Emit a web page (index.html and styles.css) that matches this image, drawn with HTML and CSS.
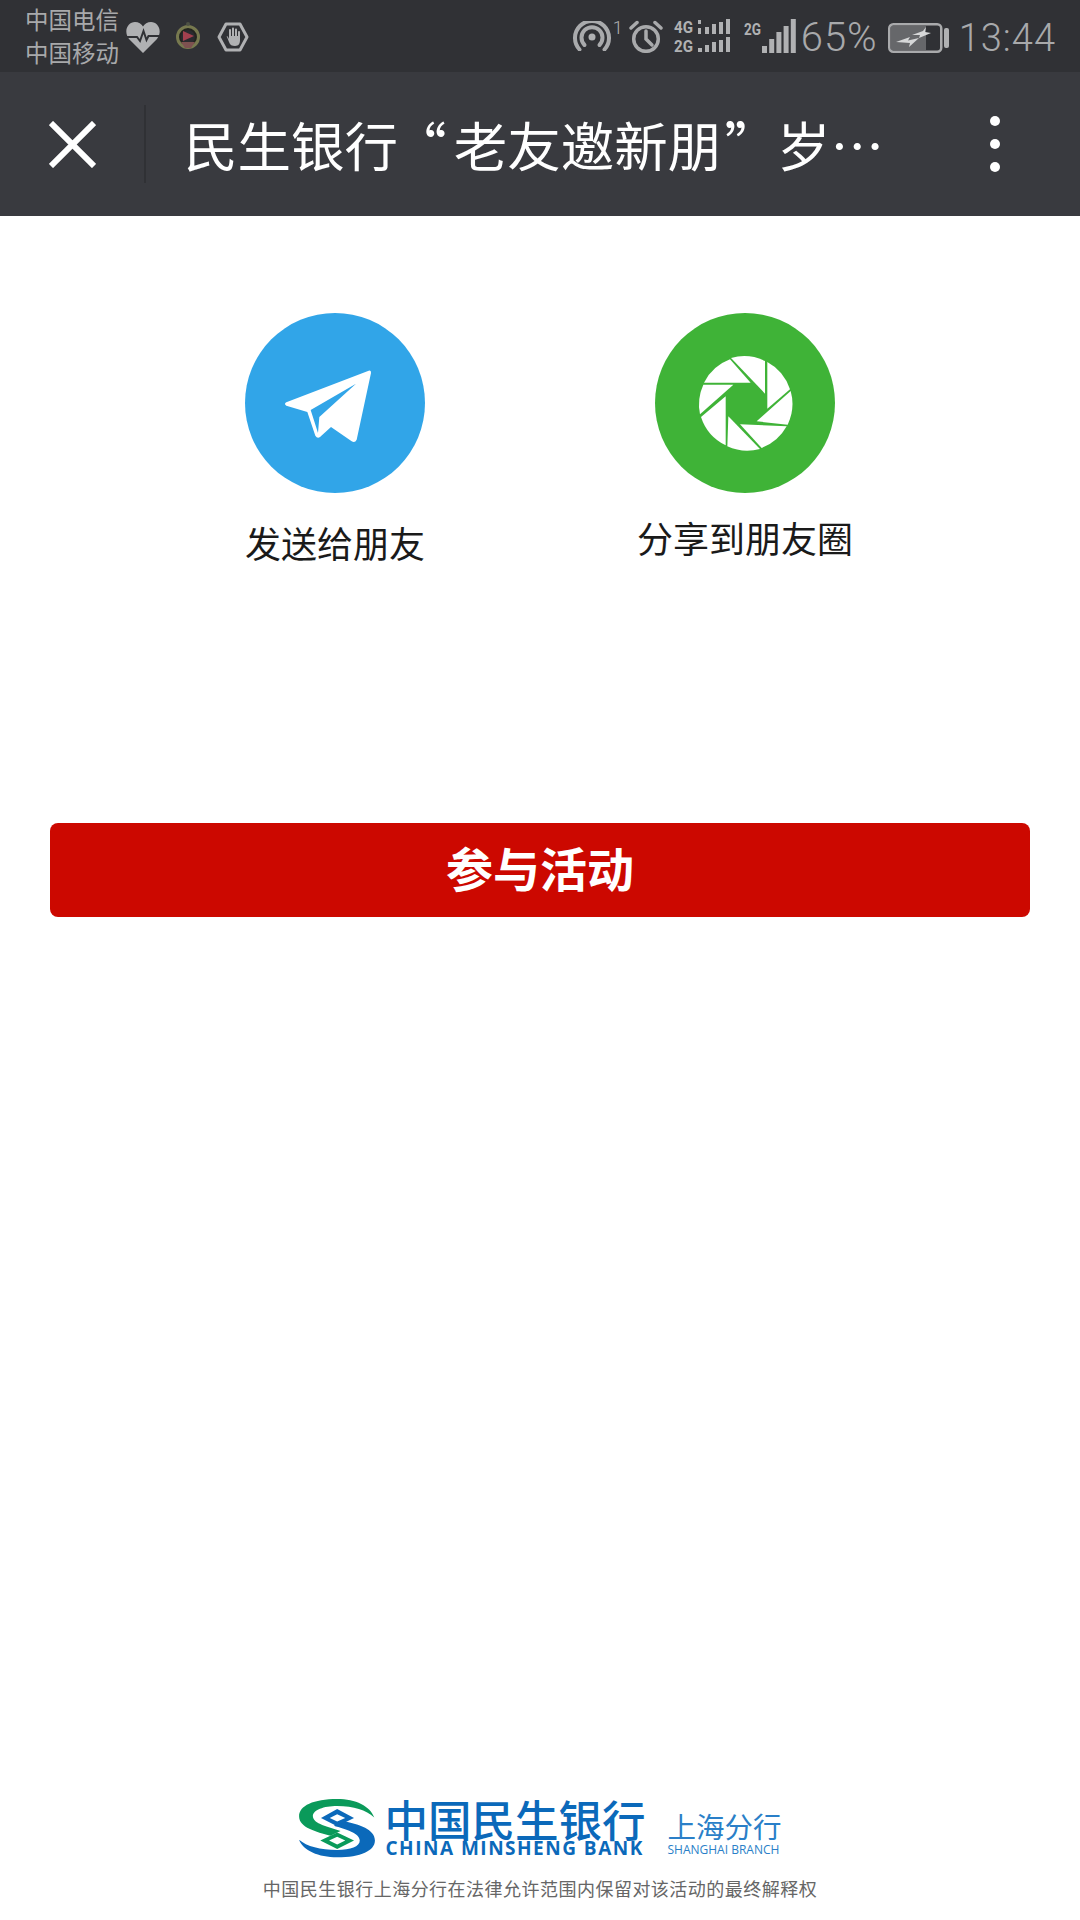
FILE: index.html
```html
<!DOCTYPE html>
<html lang="zh-CN">
<head>
<meta charset="utf-8">
<title>民生银行</title>
<link rel="stylesheet" href="styles.css">
</head>
<body>
<div class="page">
  <header class="status">
    <div class="carriers"><span>中国电信</span><span>中国移动</span></div>
    <svg class="ic-heart" viewBox="0 0 34 32"><path class="g" d="M17 32 L3 18 C-3 10 2 1 9 1 C12.500 1 15.500 3 17 5.500 C18.500 3 21.500 1 25 1 C32 1 37 10 31 18 Z"/><path class="pulse" d="M1 16 H11 L14 20 L17.500 10 L20.500 19 L22.500 15 H33"/></svg>
    <svg class="ic-medal" viewBox="0 0 26 32"><circle class="medal-ring" cx="13" cy="16" r="10.500"/><circle class="medal-in" cx="13" cy="16" r="7"/><path class="medal-red" d="M8 10 L19 15 L8 20 Z"/><path class="medal-low" d="M6 21 H20 L16 27 H10 Z"/><circle class="medal-top" cx="13" cy="3" r="2"/></svg>
    <svg class="ic-hex" viewBox="0 0 32 30"><path class="hex" d="M9 2 H23 L30 15 L23 28 H9 L2 15 Z"/><path class="g" d="M10 15 L12 20 C13 23 15 24 18 24 C22 24 23 21 23 18 V10 C23 8.500 21 8.500 21 10 V14 H20 V7.500 C20 6 18 6 18 7.500 V14 H17 V6.500 C17 5 15 5 15 6.500 V14 H14 V8 C14 6.500 12 6.500 12 8 V17 C11 14 9 13 10 15 Z"/></svg>
    <div class="status-right">
      <svg class="ic-radio" viewBox="0 0 38 30"><circle class="g" cx="19" cy="16" r="3.500"/><path class="line thick" d="M11.500 24 A10.500 10.500 0 1 1 26.500 24"/><path class="line thick" d="M6.500 28.500 A17 17 0 1 1 31.500 28.500"/></svg>
      <span class="sup">1</span>
      <svg class="ic-alarm" viewBox="0 0 34 33"><circle class="line" cx="17" cy="19" r="12.300"/><path class="line" d="M17 11 V19 L23 25"/><path class="line" d="M2 8 L8 2.500 M32 8 L26 2.500"/></svg>
      <svg class="ic-dual" viewBox="0 0 58 34">
        <text class="sig-t" x="0" y="14" textLength="19" lengthAdjust="spacingAndGlyphs">4G</text>
        <text class="sig-t" x="0" y="33" textLength="19" lengthAdjust="spacingAndGlyphs">2G</text>
        <path class="g" d="M24 9h3v6h-3zM24 1h3v4h-3zM31 8h4v7h-4zM38 5h4v10h-4zM45 3h4v12h-4zM52 0h4v15h-4zM24 29h4v4h-4zM31 26h4v7h-4zM38 23h4v10h-4zM45 21h4v12h-4zM52 18h4v15h-4z"/>
      </svg>
      <svg class="ic-2g" viewBox="0 0 18 14"><text class="sig-t" x="0" y="14" textLength="17" lengthAdjust="spacingAndGlyphs">2G</text></svg>
      <svg class="ic-signal" viewBox="0 0 34 34"><path class="g" d="M0 27h5v7H0zM7.200 20h5v14h-5zM14.400 13h5v21h-5zM21.600 7h5v27h-5zM28.800 0h5v34h-5z"/></svg>
      <span class="pct">65%</span>
      <svg class="ic-batt" viewBox="0 0 62 30"><rect class="batt-fill" x="3" y="3" width="35" height="24"/><rect class="batt" x="1.250" y="1.250" width="52" height="27.500" rx="4"/><rect class="g" x="56" y="5" width="5" height="20" rx="2"/><path class="bolt" d="M8 19 L22 14 L20 17.500 L31 15 L21 24 L22 20 Z"/><path class="bolt" d="M24 12 L35 8 L38 4 L37 9 L43 10 L31 15 L32 12 Z"/></svg>
      <span class="time">13:44</span>
    </div>
  </header>

  <nav class="nav">
    <svg class="ic-close" viewBox="0 0 48 48"><path d="M2 2 L46 46 M46 2 L2 46"/></svg>
    <div class="nav-div"></div>
    <div class="nav-title">民生银行<span class="q-open">“</span>老友邀新朋<span class="q-close">”</span>岁…</div>
    <div class="dots"><i></i><i></i><i></i></div>
  </nav>

  <main class="main">
    <section class="share">
      <div class="share-item">
        <svg class="share-ic" viewBox="75 68 540 540">
          <circle class="blue" cx="345" cy="338" r="270"/>
          <path class="w" d="M446 241 L199 336 Q191 341 199 346 L262 365 L286 436 Q292 446 300 440 L333 410 L395 453 Q405 459 410 448 L453 248 Q454 238 446 241 Z"/>
          <path class="blue" d="M408 280 L272 359 L294 428 L298 380 Z"/>
        </svg>
        <div class="share-label l1">发送给朋友</div>
      </div>
      <div class="share-item">
        <svg class="share-ic" viewBox="75 68 540 540">
          <circle class="green" cx="345" cy="338" r="270"/>
          <path class="w" d="M222 277 H362 L300 207 A144 144 0 0 0 222 277 Z"/>
          <path class="w" d="M303 203 L405 310 V212 A144 144 0 0 0 303 203 Z"/>
          <path class="w" d="M412 215 V355 L480 297 A144 144 0 0 0 412 215 Z"/>
          <path class="w" d="M482 302 L380 393 L473 403 A144 144 0 0 0 482 302 Z"/>
          <path class="w" d="M470 408 L330 402 L395 473 A144 144 0 0 0 470 408 Z"/>
          <path class="w" d="M390 476 L295 378 L292 468 A144 144 0 0 0 390 476 Z"/>
          <path class="w" d="M287 465 V318 L213 380 A144 144 0 0 0 287 465 Z"/>
          <path class="w" d="M210 372 L310 283 H220 A144 144 0 0 0 210 372 Z"/>
        </svg>
        <div class="share-label l2">分享到朋友圈</div>
      </div>
    </section>
    <button class="cta">参与活动</button>
  </main>

  <footer class="foot">
    <div class="logo">
      <svg class="mark" viewBox="27 27 225 175">
        <path class="cms-g" d="M250 82 C238 48 195 27 140 27 C70 27 27 47 27 78 C27 112 78 124 120 136 L150 122 C115 110 68 100 68 78 C68 60 100 48 140 48 C190 48 225 60 250 82 Z"/>
        <path class="cms-b" d="M27 148 C38 180 85 200 140 200 C210 200 252 180 252 150 C252 116 205 103 160 92 L130 106 C165 116 207 128 207 150 C207 168 180 178 140 178 C90 178 50 168 27 148 Z"/>
        <path class="cms-b" fill-rule="evenodd" d="M92 83 L140 57 L190 83 L140 108 Z M118 83 L140 94 L164 83 L140 72 Z"/>
        <path class="cms-g" fill-rule="evenodd" d="M90 150 L140 126 L190 150 L140 175 Z M116 150 L140 162 L164 150 L140 139 Z"/>
      </svg>
      <div class="logo-main">
        <div class="logo-cn">中国民生银行</div>
        <div class="logo-en">CHINA MINSHENG BANK</div>
      </div>
      <div class="logo-branch">
        <div class="branch-cn">上海分行</div>
        <div class="branch-en">SHANGHAI BRANCH</div>
      </div>
    </div>
    <p class="legal">中国民生银行上海分行在法律允许范围内保留对该活动的最终解释权</p>
  </footer>
</div>
</body>
</html>
```

FILE: styles.css
```css
* { box-sizing: border-box; }
html, body { margin: 0; padding: 0; background: #fff; }
body { font-family: "Noto Sans CJK SC", "Noto Sans", sans-serif; }
.page { width: 1080px; height: 1920px; display: flex; flex-direction: column; overflow: hidden; }

/* status bar */
.status { height: 72px; flex: none; background: #303135; color: #a8a9ab; display: flex; align-items: center; padding: 0 24px 0 25px; }
.carriers { display: flex; flex-direction: column; font-size: 23.500px; line-height: 33px; width: 95px; white-space: nowrap; }
.g { fill: #b0b1b3; }
.line { fill: none; stroke: #a9aaac; stroke-width: 3.500; stroke-linecap: round; }
.thick { stroke-width: 4; }
.ic-heart { width: 34px; height: 32px; margin-left: 6px; margin-top: 2px; }
.pulse { fill: none; stroke: #303135; stroke-width: 2; }
.ic-medal { width: 26px; height: 32px; margin-left: 15px; margin-top: 2px; }
.medal-ring { fill: #23241f; stroke: #77794f; stroke-width: 3; }
.medal-in { fill: #2a2b2f; }
.medal-red { fill: #a3404e; }
.medal-low { fill: #7d5150; }
.medal-top { fill: #4d5144; }
.ic-hex { width: 32px; height: 30px; margin-left: 16px; margin-top: 2px; }
.hex { fill: none; stroke: #b0b1b3; stroke-width: 3; stroke-linejoin: round; }
.status-right { margin-left: auto; display: flex; align-items: center; }
.ic-radio { width: 38px; height: 30px; margin-top: -1px; }
.sup { font: 300 18px/20px Roboto, sans-serif; margin: -16px 0 0 2px; width: 14px; color: #b0b1b3; }
.ic-alarm { width: 34px; height: 33px; margin-left: 2px; }
.ic-dual { width: 58px; height: 34px; margin-left: 11px; overflow: visible; }
.sig-t { font: 700 17px "Liberation Sans Narrow", Roboto, sans-serif; fill: #b0b1b3; }
.ic-2g { width: 18px; height: 14px; margin: -16px 0 0 12px; overflow: visible; }
.ic-signal { width: 34px; height: 34px; margin-left: 0; }
.pct { font: 300 40px/40px Roboto, sans-serif; letter-spacing: 1px; margin: 3px 0 0 5px; width: 87px; white-space: nowrap; }
.ic-batt { width: 62px; height: 30px; margin-top: 3px; }
.batt { fill: none; stroke: #a9aaac; stroke-width: 2.500; }
.batt-fill { fill: #66676a; }
.bolt { fill: #d6d7d8; }
.time { font: 300 38px/40px Roboto, sans-serif; letter-spacing: 1px; margin: 3px 0 0 9px; white-space: nowrap; }

/* nav */
.nav { height: 144px; flex: none; background: #393a3f; color: #fff; display: flex; align-items: center; padding-left: 49px; }
.ic-close { width: 47px; height: 47px; flex: none; }
.ic-close path { fill: none; stroke: #fff; stroke-width: 6; }
.nav-div { width: 2px; height: 78px; background: #303135; margin-left: 48px; flex: none; }
.nav-title { font-size: 53.500px; line-height: 70px; margin-left: 38px; width: 700px; white-space: nowrap; }
.q-open { font-feature-settings: "palt"; margin: 0 8px 0 21px; }
.q-close { font-feature-settings: "palt"; margin: 0 25px 0 4px; }
.dots { margin-left: 106px; display: flex; flex-direction: column; gap: 13px; }
.dots i { display: block; width: 10px; height: 10px; border-radius: 50%; background: #fff; }

/* main */
.main { flex: none; padding: 97px 50px 0; }
.share { display: flex; justify-content: center; gap: 170px; }
.share-item { width: 240px; display: flex; flex-direction: column; align-items: center; }
.share-ic { width: 180px; height: 180px; display: block; }
.blue { fill: #31a5e8; }
.green { fill: #3fb337; }
.w { fill: #fff; }
.share-label { font-size: 36px; line-height: 50px; color: #1a1a1a; white-space: nowrap; }
.l1 { margin-top: 24px; }
.l2 { margin-top: 19px; }
.cta { display: block; width: 980px; height: 94px; margin-top: 256px; padding: 0 0 6px; border: 0; border-radius: 8px; background: #cc0800; color: #fff; font: 700 47px/88px "Noto Sans CJK SC", sans-serif; }

/* footer */
.foot { margin-top: auto; padding-bottom: 20px; display: flex; flex-direction: column; align-items: center; }
.logo { display: flex; align-items: flex-start; }
.mark { width: 76px; height: 59px; flex: none; }
.cms-g { fill: #0a9a5a; }
.cms-b { fill: #0b69ba; }
.logo-main { margin-left: 10px; color: #0b69ba; width: 261px; }
.logo-cn { font-size: 43.500px; font-weight: 500; line-height: 40px; white-space: nowrap; }
.logo-en { font: 700 19px/18px "Open Sans", sans-serif; letter-spacing: 1.500px; white-space: nowrap; padding-left: 1px; }
.logo-branch { margin-left: 22px; color: #2a7fc8; width: 114px; padding-top: 12px; }
.branch-cn { font-size: 28.500px; line-height: 30px; white-space: nowrap; }
.branch-en { font: 400 12px/14px "Open Sans", sans-serif; white-space: nowrap; margin-top: 2px; }
.legal { margin: 18px 0 0; font-size: 18px; line-height: 24px; letter-spacing: 0.480px; color: #666; white-space: nowrap; }
```
